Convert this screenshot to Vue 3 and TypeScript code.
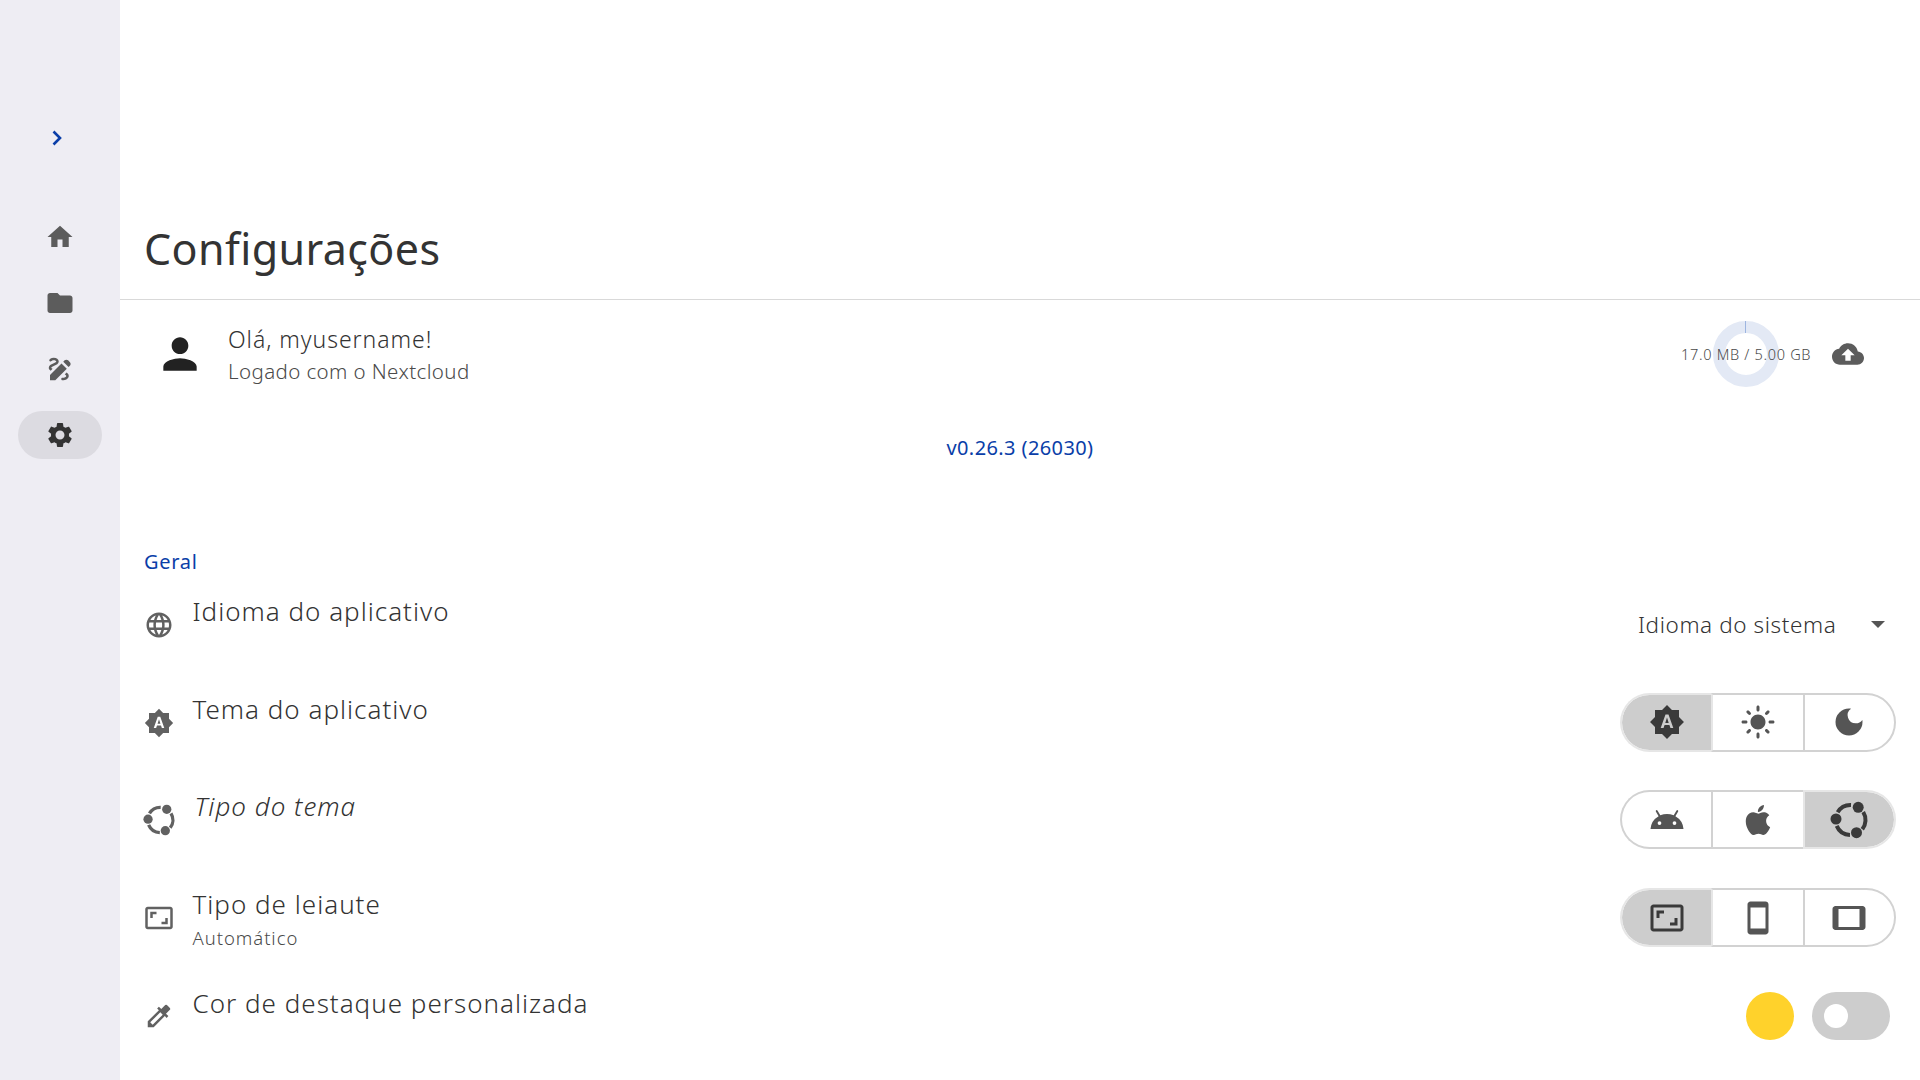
<script setup lang="ts">
const P = {
  home: 'M10 20v-6h4v6h5v-8h3L12 3 2 12h3v8z',
  folder: 'M10 4H4c-1.1 0-1.99.9-1.99 2L2 18c0 1.1.9 2 2 2h16c1.1 0 2-.9 2-2V8c0-1.1-.9-2-2-2h-8l-2-2z',
  draw: 'M18.85 10.39l1.06-1.06c.78-.78.78-2.05 0-2.83L18.5 5.09c-.78-.78-2.05-.78-2.83 0l-1.06 1.06 4.24 4.24zm-5.66-2.83L4 16.76V21h4.24l9.19-9.19-4.24-4.25zM19 17.5c0 2.19-2.54 3.5-5 3.5-.55 0-1-.45-1-1s.45-1 1-1c1.54 0 3-.73 3-1.5 0-.47-.48-.87-1.23-1.2l1.48-1.48c1.07.63 1.75 1.47 1.75 2.68zM4.58 13.35C3.61 12.79 3 12.06 3 11c0-1.8 1.89-2.63 3.56-3.36C7.59 7.18 9 6.56 9 6c0-.41-.78-1-2-1-1.26 0-1.8.61-1.83.64-.35.41-.98.46-1.4.12-.41-.34-.49-.95-.15-1.38C3.73 4.24 4.76 3 7 3s4 1.32 4 3c0 1.87-1.93 2.72-3.64 3.47C6.42 9.88 5 10.5 5 11c0 .31.43.6 1.07.86l-1.49 1.49z',
  settings: 'M19.14 12.94c.04-.3.06-.61.06-.94 0-.32-.02-.64-.07-.94l2.03-1.58c.18-.14.23-.41.12-.61l-1.92-3.32c-.12-.22-.37-.29-.59-.22l-2.39.96c-.5-.38-1.03-.7-1.62-.94l-.36-2.54c-.04-.24-.24-.41-.48-.41h-3.84c-.24 0-.43.17-.47.41l-.36 2.54c-.59.24-1.13.57-1.62.94l-2.39-.96c-.22-.08-.47 0-.59.22L2.74 8.87c-.12.21-.08.47.12.61l2.03 1.58c-.05.3-.09.63-.09.94s.02.64.07.94l-2.03 1.58c-.18.14-.23.41-.12.61l1.92 3.32c.12.22.37.29.59.22l2.39-.96c.5.38 1.03.7 1.62.94l.36 2.54c.05.24.24.41.48.41h3.84c.24 0 .44-.17.47-.41l.36-2.54c.59-.24 1.13-.56 1.62-.94l2.39.96c.22.08.47 0 .59-.22l1.92-3.32c.12-.22.07-.47-.12-.61l-2.01-1.58zM12 15.6c-1.98 0-3.6-1.62-3.6-3.6s1.62-3.6 3.6-3.6 3.6 1.62 3.6 3.6-1.62 3.6-3.6 3.6z',
  person: 'M12 12c2.21 0 4-1.79 4-4s-1.79-4-4-4-4 1.79-4 4 1.79 4 4 4zm0 2c-2.67 0-8 1.34-8 4v2h16v-2c0-2.66-5.33-4-8-4z',
  cloud: 'M19.35 10.04C18.67 6.59 15.64 4 12 4 9.11 4 6.6 5.64 5.35 8.04 2.34 8.36 0 10.91 0 14c0 3.31 2.69 6 6 6h13c2.76 0 5-2.24 5-5 0-2.64-2.05-4.78-4.65-4.96zM14 13v4h-4v-4H7l5-5 5 5h-3z',
  language: 'M11.99 2C6.47 2 2 6.48 2 12s4.47 10 9.99 10C17.52 22 22 17.52 22 12S17.52 2 11.99 2zm6.93 6h-2.95c-.32-1.25-.78-2.45-1.38-3.56 1.84.63 3.37 1.91 4.33 3.56zM12 4.04c.83 1.2 1.48 2.53 1.91 3.96h-3.82c.43-1.43 1.08-2.76 1.91-3.96zM4.26 14C4.1 13.36 4 12.69 4 12s.1-1.36.26-2h3.38c-.08.66-.14 1.32-.14 2 0 .68.06 1.34.14 2H4.26zm.82 2h2.95c.32 1.25.78 2.45 1.38 3.56-1.84-.63-3.37-1.9-4.33-3.56zm2.95-8H5.08c.96-1.66 2.49-2.93 4.33-3.56C8.81 5.55 8.35 6.75 8.03 8zM12 19.96c-.83-1.2-1.48-2.53-1.91-3.96h3.82c-.43 1.43-1.08 2.76-1.91 3.96zM14.34 14H9.66c-.09-.66-.16-1.32-.16-2 0-.68.07-1.35.16-2h4.68c.09.65.16 1.32.16 2 0 .68-.07 1.34-.16 2zm.25 5.56c.6-1.11 1.06-2.31 1.38-3.56h2.95c-.96 1.65-2.49 2.93-4.33 3.56zM16.36 14c.08-.66.14-1.32.14-2 0-.68-.06-1.34-.14-2h3.38c.16.64.26 1.31.26 2s-.1 1.36-.26 2h-3.38z',
  auto: 'M10.85 12.65h2.3L12 9l-1.15 3.65zM20 8.69V4h-4.69L12 .69 8.69 4H4v4.69L.69 12 4 15.31V20h4.69L12 23.31 15.31 20H20v-4.69L23.31 12 20 8.69zM14.3 16l-.7-2h-3.2l-.7 2H7.8L11 7h2l3.2 9h-1.9z',
  light: 'M12 7c-2.76 0-5 2.24-5 5s2.24 5 5 5 5-2.24 5-5-2.24-5-5-5zM2 13h2c.55 0 1-.45 1-1s-.45-1-1-1H2c-.55 0-1 .45-1 1s.45 1 1 1zm18 0h2c.55 0 1-.45 1-1s-.45-1-1-1h-2c-.55 0-1 .45-1 1s.45 1 1 1zM11 2v2c0 .55.45 1 1 1s1-.45 1-1V2c0-.55-.45-1-1-1s-1 .45-1 1zm0 18v2c0 .55.45 1 1 1s1-.45 1-1v-2c0-.55-.45-1-1-1s-1 .45-1 1zM5.99 4.58c-.39-.39-1.03-.39-1.41 0-.39.39-.39 1.03 0 1.41l1.06 1.06c.39.39 1.03.39 1.41 0s.39-1.03 0-1.41L5.99 4.58zm12.37 12.37c-.39-.39-1.03-.39-1.41 0-.39.39-.39 1.03 0 1.41l1.06 1.06c.39.39 1.03.39 1.41 0 .39-.39.39-1.03 0-1.41l-1.06-1.06zm1.06-10.96c.39-.39.39-1.03 0-1.41-.39-.39-1.03-.39-1.41 0l-1.06 1.06c-.39.39-.39 1.03 0 1.41s1.03.39 1.41 0l1.06-1.06zM7.05 18.36c.39-.39.39-1.03 0-1.41-.39-.39-1.03-.39-1.41 0l-1.06 1.06c-.39.39-.39 1.03 0 1.41s1.03.39 1.41 0l1.06-1.06z',
  dark: 'M12 3a9 9 0 1 0 9 9c0-.46-.04-.92-.1-1.36a5.389 5.389 0 0 1-4.4 2.26 5.403 5.403 0 0 1-3.14-9.8c-.44-.06-.9-.1-1.36-.1z',
  android: 'M17.6 9.48l1.84-3.18c.16-.31.04-.69-.26-.85a.637.637 0 0 0-.83.22l-1.88 3.24a11.463 11.463 0 0 0-8.94 0L5.65 5.67a.643.643 0 0 0-.87-.2c-.28.18-.37.54-.22.83L6.4 9.48A10.78 10.78 0 0 0 1 18h22a10.78 10.78 0 0 0-5.4-8.52zM7 15.25a1.25 1.25 0 1 1 0-2.5 1.25 1.25 0 0 1 0 2.5zm10 0a1.25 1.25 0 1 1 0-2.5 1.25 1.25 0 0 1 0 2.5z',
  apple: 'M18.71 19.5c-.83 1.24-1.71 2.45-3.05 2.47-1.34.03-1.77-.79-3.29-.79-1.53 0-2 .77-3.27.82-1.31.05-2.3-1.32-3.14-2.53C4.25 17 2.94 12.45 4.7 9.39c.87-1.52 2.43-2.48 4.12-2.51 1.28-.02 2.5.87 3.29.87.78 0 2.26-1.07 3.81-.91.65.03 2.47.26 3.64 1.98-.09.06-2.17 1.28-2.15 3.81.03 3.02 2.65 4.03 2.68 4.04-.03.07-.42 1.44-1.38 2.83M13 3.5c.73-.83 1.94-1.46 2.94-1.5.13 1.17-.34 2.35-1.04 3.19-.69.85-1.83 1.51-2.95 1.42-.15-1.15.41-2.35 1.05-3.11z',
  aspect: 'M19 12h-2v3h-3v2h5v-5zM7 9h3V7H5v5h2V9zm14-6H3c-1.1 0-2 .9-2 2v14c0 1.1.9 2 2 2h18c1.1 0 2-.9 2-2V5c0-1.1-.9-2-2-2zm0 16.01H3V4.99h18v14.02z',
  phone: 'M17 1.01L7 1c-1.1 0-2 .9-2 2v18c0 1.1.9 2 2 2h10c1.1 0 2-.9 2-2V3c0-1.1-.9-1.99-2-1.99zM17 19H7V5h10v14z',
  tablet: 'M21 4H3c-1.1 0-2 .9-2 2v12c0 1.1.9 2 2 2h18c1.1 0 1.99-.9 1.99-2L23 6c0-1.1-.9-2-2-2zm-2 14H5V6h14v12z',
  colorize: 'M20.71 5.63l-2.34-2.34a1 1 0 0 0-1.41 0l-3.12 3.12-1.93-1.91-1.41 1.41 1.42 1.42L3 16.25V21h4.75l8.92-8.92 1.42 1.42 1.41-1.41-1.92-1.92 3.12-3.12c.4-.4.4-1.03.01-1.42zM6.92 19L5 17.08l8.06-8.06 1.92 1.92L6.92 19z',
}
const UBUNTU = 'ubuntu'
const nav = [
  { d: P.home, active: false },
  { d: P.folder, active: false },
  { d: P.draw, active: false },
  { d: P.settings, active: true },
]
type Row = { icon: string; label: string; sub?: string; italic?: boolean; kind: string; opts?: { d: string; on?: boolean }[] }
const rows: Row[] = [
  { icon: P.language, label: 'Idioma do aplicativo', kind: 'select' },
  { icon: P.auto, label: 'Tema do aplicativo', kind: 'seg', opts: [{ d: P.auto, on: true }, { d: P.light }, { d: P.dark }] },
  { icon: UBUNTU, label: 'Tipo do tema', italic: true, kind: 'seg', opts: [{ d: P.android }, { d: P.apple }, { d: UBUNTU, on: true }] },
  { icon: P.aspect, label: 'Tipo de leiaute', sub: 'Automático', kind: 'seg', opts: [{ d: P.aspect, on: true }, { d: P.phone }, { d: P.tablet }] },
  { icon: P.colorize, label: 'Cor de destaque personalizada', kind: 'switch' },
]
</script>

<template>
  <div class="app">
    <aside class="rail">
      <svg class="chev" viewBox="0 0 12 18" width="12" height="18"><path d="M2.5 2.500 9 9l-6.500 6.500" /></svg>
      <nav class="nav">
        <div v-for="(n, i) in nav" :key="i" class="nav-item" :class="{ active: n.active }">
          <svg viewBox="0 0 24 24" width="30" height="30"><path :d="n.d" /></svg>
        </div>
      </nav>
    </aside>
    <main class="main">
      <header class="head"><h1>Configurações</h1></header>
      <section class="account">
        <svg class="person" viewBox="0 0 24 24" width="50" height="50"><path :d="P.person" /></svg>
        <div class="who">
          <div class="hello">Olá, myusername!</div>
          <div class="logged">Logado com o Nextcloud</div>
        </div>
        <div class="quota">
          <div class="ring"><i class="tick"></i></div>
          <span class="quota-text">17.0 MB / 5.00 GB</span>
        </div>
        <svg class="cloud" viewBox="0 0 24 24" width="32" height="32"><path :d="P.cloud" /></svg>
      </section>
      <div class="version">v0.26.3 (26030)</div>
      <div class="group">Geral</div>
      <div class="rows">
        <div v-for="r in rows" :key="r.label" class="row">
          <div class="row-icon">
            <svg v-if="r.icon === UBUNTU" viewBox="-20.500 -19 38 38" width="32" height="32">
              <path class="arc" d="M12.72 -7.95A15 15 0 0 1 11.82 9.23M-.52 14.99A15 15 0 0 1 -13.81 5.86M-12.86 -7.73A15 15 0 0 1 .52 -14.99" />
              <circle cx="7.700" cy="-12.700" r="5.500" /><circle cx="-14.500" cy="-1" r="5.500" /><circle cx="6" cy="12.700" r="5.500" />
            </svg>
            <svg v-else viewBox="0 0 24 24" width="30" height="30"><path :d="r.icon" /></svg>
          </div>
          <div class="row-text">
            <div class="label" :class="{ italic: r.italic }">{{ r.label }}</div>
            <div v-if="r.sub" class="sub">{{ r.sub }}</div>
          </div>
          <div v-if="r.kind === 'select'" class="select">
            <span>Idioma do sistema</span>
            <i class="caret"></i>
          </div>
          <div v-else-if="r.kind === 'seg'" class="seg">
            <div v-for="(o, i) in r.opts" :key="i" class="cell" :class="{ on: o.on }">
              <svg v-if="o.d === UBUNTU" viewBox="-20.500 -19 38 38" width="38" height="38">
                <path class="arc" d="M12.72 -7.95A15 15 0 0 1 11.82 9.23M-.52 14.99A15 15 0 0 1 -13.81 5.86M-12.86 -7.73A15 15 0 0 1 .52 -14.99" />
                <circle cx="7.700" cy="-12.700" r="5.500" /><circle cx="-14.500" cy="-1" r="5.500" /><circle cx="6" cy="12.700" r="5.500" />
              </svg>
              <svg v-else viewBox="0 0 24 24" width="36" height="36"><path :d="o.d" /></svg>
            </div>
          </div>
          <div v-else class="accent">
            <div class="swatch"></div>
            <div class="switch"><i></i></div>
          </div>
        </div>
      </div>
    </main>
  </div>
</template>

<style>
html, body { margin: 0; background: #fff; overflow: hidden; }
</style>

<style scoped>
.app { display: flex; width: 1920px; height: 1080px; overflow: hidden; font-family: "Noto Sans", sans-serif; color: #333; background: #fff; }
.rail { width: 120px; flex: none; background: #eeedf3; display: flex; flex-direction: column; align-items: center; padding-top: 129px; box-sizing: border-box; }
.chev { margin-left: -6px; }
.chev path { fill: none; stroke: #0a3ea8; stroke-width: 2.6; }
.nav { margin-top: 66px; display: flex; flex-direction: column; gap: 18px; }
.nav-item { width: 84px; height: 48px; border-radius: 24px; display: flex; align-items: center; justify-content: center; }
.nav-item svg { fill: #5c5c5c; }
.nav-item.active { background: #dcdbe1; }
.nav-item.active svg { fill: #333; }
.main { flex: 1; min-width: 0; display: flex; flex-direction: column; }
.head { height: 300px; flex: none; border-bottom: 1px solid #d9d9d9; display: flex; align-items: flex-end; padding-left: 24px; box-sizing: border-box; }
h1 { margin: 0 0 20px; font-size: 43px; line-height: 60px; font-weight: 400; letter-spacing: 0.4px; color: #333; }
.account { height: 110px; flex: none; display: flex; align-items: center; padding: 0 56px 2px 35px; box-sizing: border-box; }
.person { fill: #222; flex: none; }
.who { margin-left: 23px; flex: 1; padding-top: 2px; }
.hello { font-size: 23px; line-height: 32px; font-weight: 300; letter-spacing: 0.95px; }
.logged { font-size: 20.500px; line-height: 33px; font-weight: 300; letter-spacing: 0.4px; color: #4a4a4a; }
.quota { position: relative; width: 130px; height: 66px; display: flex; align-items: center; justify-content: center; }
.ring { width: 66px; height: 66px; border-radius: 50%; border: 12px solid #e3e9f5; box-sizing: border-box; position: relative; }
.tick { position: absolute; left: 20px; top: -12px; width: 1px; height: 12px; background: #9db5e0; }
.quota-text { position: absolute; left: 0; right: 0; text-align: center; font-size: 14.500px; letter-spacing: 0.7px; color: #4a4a4a; white-space: nowrap; line-height: 20px; font-weight: 300; }
.cloud { fill: #5c5c5c; margin-left: 21px; flex: none; }
.version { margin-top: 23px; text-align: center; font-size: 20px; line-height: 30px; letter-spacing: 0.4px; color: #0a3ea8; }
.group { margin-top: 85px; padding-left: 24px; font-size: 20px; line-height: 28px; letter-spacing: 0.7px; color: #0a3ea8; }
.rows { padding: 0 24px 0 23px; }
.row { height: 97.750px; display: flex; align-items: center; }
.row-icon { width: 32px; height: 32px; flex: none; display: flex; align-items: center; justify-content: center; }
.row-icon svg { fill: #616161; }
.row-text { flex: 1; align-self: flex-start; margin-left: 17.500px; padding-top: 18px; }
.row:last-child .row-text { padding-top: 19px; }
.label { font-size: 26px; line-height: 34px; font-weight: 300; letter-spacing: 1px; color: #333; }
.label.italic { font-style: italic; margin-left: 2px; letter-spacing: 1px; margin-top: -1px; }
.sub { font-size: 18.500px; line-height: 34px; font-weight: 300; letter-spacing: 0.95px; color: #4a4a4a; }
.select { display: flex; align-items: center; width: 248px; font-size: 22.500px; font-weight: 300; letter-spacing: 0.6px; color: #333; margin-right: 10px; justify-content: space-between; }
.caret { width: 0; height: 0; border: 7px solid transparent; border-top-color: #555; border-bottom: 0; margin-right: 1px; }
.seg { display: flex; height: 59px; width: 276px; margin-top: -1px; }
.cell { flex: 1; display: flex; align-items: center; justify-content: center; box-sizing: border-box; border-width: 2px 0 2px 2px; border-style: solid; border-color: #d2d2d2; color: #555; }
.cell:first-child { border-radius: 30px 0 0 30px; }
.cell:last-child { border-right-width: 2px; border-radius: 0 30px 30px 0; }
.cell svg { fill: #555; }
.cell.on { background: #cdcdcd; background-clip: padding-box; border-color: #e6e6e6; color: #3a3a3a; }
.cell.on + .cell { border-left-color: #e6e6e6; }
.cell.on svg { fill: #3a3a3a; }
.arc { fill: none; stroke: currentColor; stroke-width: 4; }
.row-icon { color: #616161; }
.accent { display: flex; align-items: center; margin-right: 6px; gap: 18px; }
.swatch { width: 48px; height: 48px; border-radius: 50%; background: #ffd22b; }
.switch { width: 78px; height: 48px; border-radius: 24px; background: #cdcdcd; display: flex; align-items: center; padding-left: 12px; box-sizing: border-box; }
.switch i { width: 24px; height: 24px; border-radius: 50%; background: #fff; }
</style>
